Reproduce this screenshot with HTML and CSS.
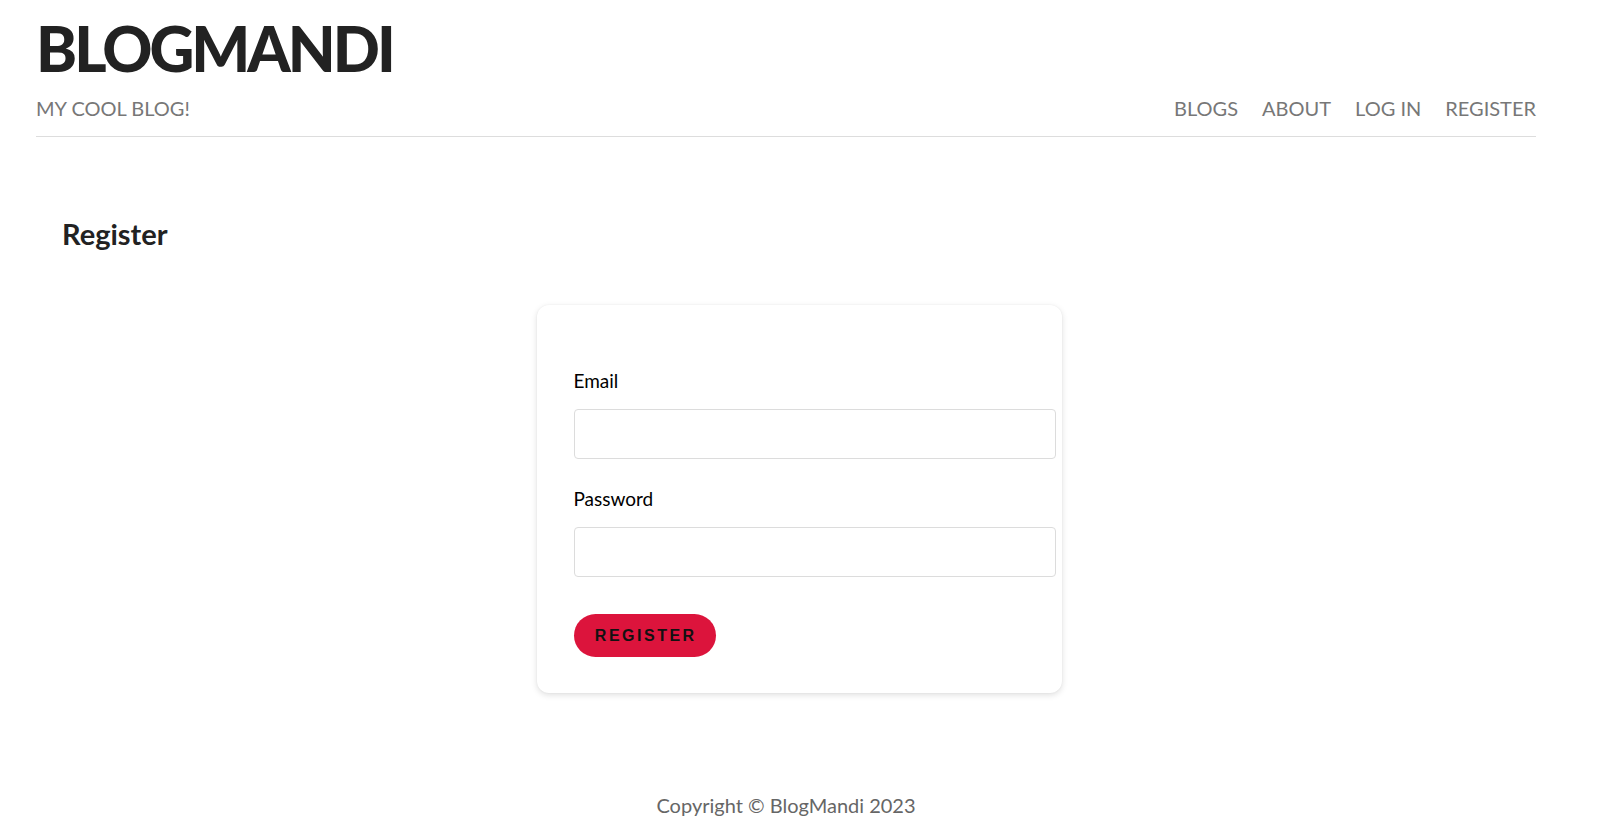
FILE: index.html
```html
<!DOCTYPE html>
<html lang="en">
<head>
<meta charset="utf-8">
<title>BlogMandi - Register</title>
<link rel="stylesheet" href="styles.css">
</head>
<body>
<div class="container">
  <header class="site-header">
    <h1 class="brand">BLOGMANDI</h1>
    <div class="header-row">
      <span class="tagline">MY COOL BLOG!</span>
      <nav class="nav">
        <a href="#">BLOGS</a>
        <a href="#">ABOUT</a>
        <a href="#">LOG IN</a>
        <a href="#">REGISTER</a>
      </nav>
    </div>
  </header>
  <main class="main">
    <h2 class="page-title">Register</h2>
    <div class="card">
      <form class="form">
        <label class="label" for="email">Email</label>
        <input class="input" id="email" type="email">
        <label class="label" for="password">Password</label>
        <input class="input" id="password" type="password">
        <button class="btn" type="button">REGISTER</button>
      </form>
    </div>
  </main>
  <footer class="footer">Copyright © BlogMandi 2023</footer>
</div>
</body>
</html>
```

FILE: styles.css
```css
* { box-sizing: border-box; }
html, body { margin: 0; padding: 0; background: #fff; }
body { font-family: "Lato", "Noto Sans", sans-serif; color: #222; }
.container { width: 1500px; margin-left: 36px; }
.site-header { padding-top: 11px; padding-bottom: 16px; border-bottom: 1px solid #dddddd; }
.brand { margin: 0; font-size: 62px; line-height: 74px; font-weight: 900; color: #222; letter-spacing: -3px; }
.header-row { display: flex; justify-content: space-between; align-items: baseline; margin-top: 11px; }
.tagline { font-size: 20px; color: #777; line-height: 24px; }
.nav { display: flex; gap: 24px; }
.nav a { font-size: 20px; color: #777; text-decoration: none; line-height: 24px; }
.main { padding: 79px 0 0 26px; }
.page-title { margin: 0; font-size: 29px; font-weight: 700; color: #222; line-height: 36px; }
.card { width: 525px; margin: 53px auto 0; padding: 64px 37px 36px; border-radius: 12px; background: #fff; box-shadow: 0 2px 6px rgba(0,0,0,0.13), 0 0 2px rgba(0,0,0,0.05); }
.form { display: flex; flex-direction: column; align-items: flex-start; }
.label { font-size: 19px; color: #000; line-height: 24px; margin-bottom: 16px; }
.input { width: calc(100% + 31px); height: 50px; border: 1px solid #dcdcdc; border-radius: 4px; margin: 0 0 28px; background: #fff; }
.btn { margin-top: 9px; background: #dc143c; color: #111; border: none; border-radius: 22px; height: 43px; width: 142px; font-family: "Liberation Sans", Arial, sans-serif; font-weight: 700; font-size: 16px; letter-spacing: 2.5px; padding: 0 0 0 2.5px; }
.footer { text-align: center; margin-top: 100px; font-size: 20px; color: #666; line-height: 24px; padding-bottom: 16px; }
```
